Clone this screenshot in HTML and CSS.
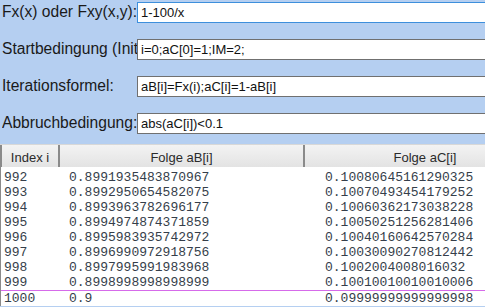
FILE: index.html
```html
<!doctype html>
<html>
<head>
    <meta charset="utf-8">
    <title>Iteration</title>
    <link rel="stylesheet" href="styles.css">
</head>
<body class="iter-body">
<div class="iter-form">
    <div class="iter-row">
        <label class="iter-label" for="fx">Fx(x) oder Fxy(x,y):</label>
        <input id="fx" class="iter-input iter-focus" type="text" value="1-100/x">
    </div>
    <div class="iter-row">
        <label class="iter-label" for="start">Startbedingung (Initialisierung):</label>
        <input id="start" class="iter-input" type="text" value="i=0;aC[0]=1;IM=2;">
    </div>
    <div class="iter-row">
        <label class="iter-label" for="formel">Iterationsformel:</label>
        <input id="formel" class="iter-input" type="text" value="aB[i]=Fx(i);aC[i]=1-aB[i]">
    </div>
    <div class="iter-row">
        <label class="iter-label" for="abbruch">Abbruchbedingung:</label>
        <input id="abbruch" class="iter-input" type="text" value="abs(aC[i])<0.1">
    </div>
</div>

<div class="iter-grid">
    <div class="iter-head">
        <div class="iter-th">Index i</div>
        <div class="iter-th">Folge aB[i]</div>
        <div class="iter-th">Folge aC[i]</div>
    </div>
    <div class="iter-rows">
        <div class="iter-tr"><span class="c-idx">992</span><span class="c-b">0.8991935483870967</span><span class="c-c">0.10080645161290325</span></div>
        <div class="iter-tr"><span class="c-idx">993</span><span class="c-b">0.8992950654582075</span><span class="c-c">0.10070493454179252</span></div>
        <div class="iter-tr"><span class="c-idx">994</span><span class="c-b">0.8993963782696177</span><span class="c-c">0.10060362173038228</span></div>
        <div class="iter-tr"><span class="c-idx">995</span><span class="c-b">0.8994974874371859</span><span class="c-c">0.10050251256281406</span></div>
        <div class="iter-tr"><span class="c-idx">996</span><span class="c-b">0.8995983935742972</span><span class="c-c">0.10040160642570284</span></div>
        <div class="iter-tr"><span class="c-idx">997</span><span class="c-b">0.8996990972918756</span><span class="c-c">0.10030090270812442</span></div>
        <div class="iter-tr"><span class="c-idx">998</span><span class="c-b">0.8997995991983968</span><span class="c-c">0.1002004008016032</span></div>
        <div class="iter-tr"><span class="c-idx">999</span><span class="c-b">0.8998998998998999</span><span class="c-c">0.10010010010010006</span></div>
        <div class="iter-tr iter-last"><span class="c-idx">1000</span><span class="c-b">0.9</span><span class="c-c">0.09999999999999998</span></div>
    </div>
</div>
</body>
</html>
```

FILE: styles.css
```css
html {
    overflow: hidden;
}

.iter-body {
    margin: 0;
    background: #b5cff1;
    font-family: "Liberation Sans", Arial, sans-serif;
    overflow: hidden;
}

.iter-form {
    padding: 2px 0 0 2px;
}

.iter-row {
    display: flex;
    align-items: center;
    height: 21px;
    margin-bottom: 16px;
    overflow: hidden;
}

.iter-row:last-child {
    margin-bottom: 0;
}

.iter-label {
    flex: none;
    width: 135px;
    overflow: hidden;
    white-space: nowrap;
    font-size: 15.6px;
    color: #1a1a1a;
    margin-top: -2px;
}

.iter-input {
    flex: none;
    width: 420px;
    height: 21px;
    box-sizing: border-box;
    margin: 0;
    padding: 0 3px;
    border: 1px solid #707070;
    background: #fff;
    font-family: "Liberation Sans", Arial, sans-serif;
    font-size: 13px;
    color: #111;
    outline: 0;
}

.iter-focus {
    border-color: #3d8fdc;
}

.iter-grid {
    margin-top: 10px;
    width: 547px;
    background: #fff;
}

.iter-head {
    display: grid;
    grid-template-columns: 60px 245px 242px;
    height: 23px;
    box-sizing: border-box;
    border-top: 1px solid #d8d8d8;
    background: linear-gradient(#f3f3f3, #e3e3e3);
}

.iter-th {
    display: flex;
    align-items: center;
    justify-content: center;
    font-size: 13px;
    color: #2b2b2b;
    padding-top: 2px;
    border-right: 2px solid #8a8a8a;
}

.iter-th:first-child {
    border-left: 2px solid #8a8a8a;
}

.iter-rows {
    padding-top: 3px;
    border-left: 1px solid #8a8a8a;
}

.iter-tr {
    display: grid;
    grid-template-columns: 59px 245px 242px;
    font-family: "Liberation Mono", "Courier New", monospace;
    font-size: 13px;
    color: #353e4a;
    white-space: pre;
}

.iter-last {
    border-top: 1px solid #d66bea;
}

.c-idx {
    padding-left: 3px;
}

.c-b {
    padding-left: 9px;
}

.c-c {
    padding-left: 20px;
}
```
